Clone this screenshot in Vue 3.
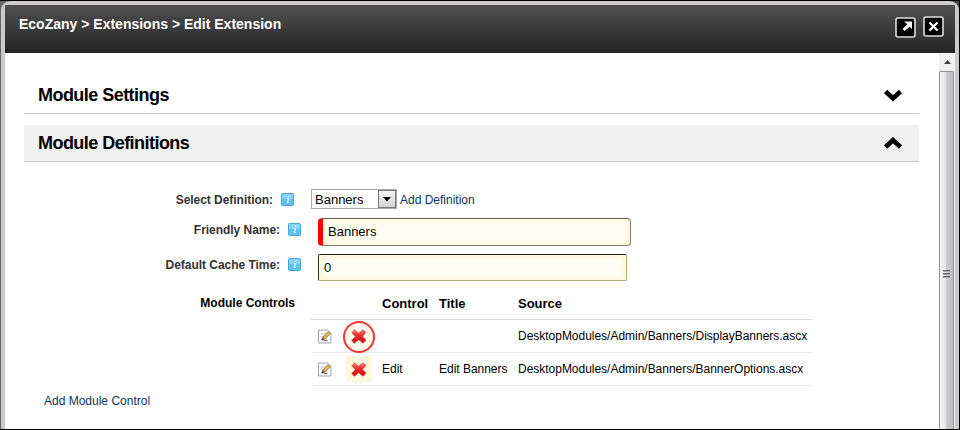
<script setup>
const rows = [
  { control: '', title: '', source: 'DesktopModules/Admin/Banners/DisplayBanners.ascx', circled: true },
  { control: 'Edit', title: 'Edit Banners', source: 'DesktopModules/Admin/Banners/BannerOptions.ascx', circled: false },
]
</script>

<template>
  <div class="frame">
    <div class="dialog">
      <header class="titlebar">
        <span class="crumbs">EcoZany &gt; Extensions &gt; Edit Extension</span>
        <svg class="winbtn" width="21" height="21" viewBox="0 0 21 21">
          <rect x="1" y="1" width="19" height="19" rx="2" fill="#000" stroke="#ddd" stroke-width="1.6" />
          <path d="M9 4.500h8v7.500l-2.300-2.300-5.200 4.300-2-2 4.800-4.700z" fill="#fff" />
        </svg>
        <svg class="winbtn last" width="21" height="21" viewBox="0 0 21 21">
          <rect x="1" y="1" width="19" height="19" rx="2" fill="#000" stroke="#ddd" stroke-width="1.6" />
          <path d="M6.500 6.500l8 8M14.500 6.500l-8 8" stroke="#fff" stroke-width="2.400" />
        </svg>
      </header>
      <div class="body">
        <main class="content">
          <div class="section">
            <h2>Module Settings</h2>
            <svg width="18" height="13" viewBox="0 0 18 13"><path d="M1.500 2.500L9 9.300L16.500 2.500" fill="none" stroke="#000" stroke-width="4.600" /></svg>
          </div>
          <div class="section open">
            <h2>Module Definitions</h2>
            <svg width="18" height="13" viewBox="0 0 18 13"><path d="M1.500 10L9 3.200L16.500 10" fill="none" stroke="#000" stroke-width="4.600" /></svg>
          </div>

          <div class="field definition">
            <label>Select Definition:</label>
            <svg class="info" width="13" height="13" viewBox="0 0 13 13"><rect x=".5" y=".5" width="12" height="12" rx="1" fill="#5fc3ee" stroke="#4aa5d2" /><path d="M1 1h11v5H1z" fill="#85d3f5" /><path d="M7 3h1.500M6 5.500h1.400l-1 4h1.300" fill="none" stroke="#fff" stroke-width="1.100" /></svg>
            <div class="select"><span>Banners</span><i><svg width="8" height="5" viewBox="0 0 8 5"><path d="M0 0h8L4 4.500z" /></svg></i></div>
            <a class="adddef">Add Definition</a>
          </div>
          <div class="field friendly">
            <label>Friendly Name:</label>
            <svg class="info" width="13" height="13" viewBox="0 0 13 13"><rect x=".5" y=".5" width="12" height="12" rx="1" fill="#5fc3ee" stroke="#4aa5d2" /><path d="M1 1h11v5H1z" fill="#85d3f5" /><path d="M7 3h1.500M6 5.500h1.400l-1 4h1.300" fill="none" stroke="#fff" stroke-width="1.100" /></svg>
            <div class="input required"><span>Banners</span></div>
          </div>
          <div class="field cache">
            <label>Default Cache Time:</label>
            <svg class="info" width="13" height="13" viewBox="0 0 13 13"><rect x=".5" y=".5" width="12" height="12" rx="1" fill="#5fc3ee" stroke="#4aa5d2" /><path d="M1 1h11v5H1z" fill="#85d3f5" /><path d="M7 3h1.500M6 5.500h1.400l-1 4h1.300" fill="none" stroke="#fff" stroke-width="1.100" /></svg>
            <div class="input"><span>0</span></div>
          </div>

          <div class="controls">
            <span class="caption">Module Controls</span>
            <div class="grid">
              <div class="row head">
                <span></span><span></span><span>Control</span><span>Title</span><span>Source</span>
              </div>
              <div v-for="row in rows" :key="row.source" class="row">
                <svg class="edit" width="14" height="15" viewBox="0 0 14 15">
                  <path d="M.5 1h9l3.500 3.500V14H.5z" fill="#f5f7f9" stroke="#a2a8ae" />
                  <path d="M3 5h5M3 7.500h3M3 10h2" stroke="#c3cbd3" />
                  <path d="M4 11l1-3 5-5.500L12.500 4.200 7.300 10z" fill="#e3b647" stroke="#8a713c" stroke-width=".7" />
                  <path d="M4 11l.8-2.200 1.600 1.300zM5.500 11.500h4" fill="#333" stroke="#555" stroke-width=".7" />
                </svg>
                <div class="delete" :class="{ circled: row.circled }">
                  <svg width="16" height="15" viewBox="0 0 16 15">
                    <defs><linearGradient id="red" x1="0" y1="0" x2="0" y2="1"><stop offset="0" stop-color="#f98c80" /><stop offset=".4" stop-color="#ee2d2d" /><stop offset="1" stop-color="#c90c12" /></linearGradient></defs>
                    <path d="M3.500 .8L7.600 4.300 12 .8l3 2.600-3.500 3.800 3.500 4-3 3-4.300-3.500-4.400 3.500-2.600-2.800L4.500 7.500.8 4z" fill="url(#red)" stroke="#d33a35" stroke-width=".7" stroke-linejoin="round" />
                  </svg>
                </div>
                <span>{{ row.control }}</span>
                <span class="cell">{{ row.title }}</span>
                <span class="cell">{{ row.source }}</span>
              </div>
            </div>
          </div>
          <a class="addcontrol">Add Module Control</a>
        </main>
        <aside class="scrollbar">
          <div class="up"><svg width="7" height="4" viewBox="0 0 7 4"><path d="M0 4L3.500 0 7 4z" fill="#444" /></svg></div>
          <div class="thumb"><div class="grip"><b></b><b></b><b></b></div></div>
        </aside>
      </div>
    </div>
  </div>
</template>

<style>
body { margin: 0; overflow: hidden; background: #000; }
</style>
<style scoped>
* { box-sizing: border-box; }
.frame { width: 960px; height: 430px; padding: 1px 1px 1px 0; background: linear-gradient(#666, #666) 0 1px / 12px 428px no-repeat, linear-gradient(#444, #444) 947px 1px / 12px 12px no-repeat, #000; font: 12px/14px "Liberation Sans", Arial, sans-serif; color: #000; overflow: hidden; }
.dialog { height: 428px; border: solid #cbc9ca; border-width: 4px 4px 0 4px; border-radius: 9px 9px 0 0; margin-left: 1px; background: #cbc9ca; display: flex; flex-direction: column; }
.titlebar { height: 48px; flex: none; background: linear-gradient(#505050, #242424); display: flex; align-items: flex-start; padding: 12px 11px 0 14px; }
.crumbs { flex: 1; color: #fff; font-weight: bold; font-size: 14px; line-height: 15px; white-space: nowrap; }
.winbtn { margin-right: 7px; }
.winbtn.last { margin: -1px 0 0; }
.body { flex: 1; display: flex; min-height: 0; }
.content { flex: 1; background: #fff; padding: 24px 20px 0 19px; white-space: nowrap; }
.section { height: 37px; display: flex; align-items: center; justify-content: space-between; padding: 0 17px 0 14px; border-bottom: 1px solid #c8c8c8; }
.section.open { background: #f0f0f0; margin-top: 11px; }
h2 { margin: 0; font-size: 18px; line-height: 20px; letter-spacing: -0.54px; }
.field { display: flex; align-items: flex-start; }
.field label { font-weight: bold; color: #333; text-align: right; flex: none; letter-spacing: -0.04px; }
.info { margin-left: 8px; flex: none; }
.definition { margin-top: 27px; height: 29px; }
.definition label { width: 249px; padding-top: 4px; }
.definition .info { margin-top: 4px; }
.friendly { height: 36px; }
.friendly label, .cache label { width: 256px; padding-top: 5px; }
.friendly .info { margin-top: 5px; }
.cache label, .cache .info { margin-top: 4px; padding-top: 0; }
.select { width: 86px; height: 20px; margin-left: 17px; border: 1px solid #aaa; display: flex; justify-content: space-between; padding-left: 3px; font-size: 13px; line-height: 20px; }
.select i { width: 18px; height: 18px; border: 1px solid #777; background: linear-gradient(#f4f4f4, #d3d3d3); display: flex; align-items: center; justify-content: center; }
a { color: #0b3460; }
.adddef { margin: 4px 0 0 3px; }
.input { width: 309px; height: 27px; margin: 0 0 0 17px; border: 1px solid; border-color: #222 #b8ad78 #b8ad78 #302e20; border-radius: 2px; background: #fffef5; box-shadow: inset 0 0 7px 1px #fff3cc; padding-left: 5px; line-height: 26px; font-size: 13px; }
.input.required { width: 313px; height: 28px; border-color: #625a48 #847b62 #847b62 red; border-left-width: 5px; border-radius: 4px; }
.cache { height: 41px; }
.controls { display: flex; }
.caption { width: 271px; text-align: right; font-weight: bold; padding-top: 1px; }
.grid { margin-left: 16px; width: 501px; }
.row { display: grid; grid-template-columns: 33px 38px 57px 79px 1fr; grid-template-rows: 100%; height: 33px; align-items: center; border-bottom: 1px solid #ebebeb; }
.row.head { height: 25px; align-items: start; font-size: 13px; font-weight: bold; padding-top: 2px; border-color: #ddd; }
.cell { letter-spacing: -0.02px; }
.edit { margin-left: 7px; }
.delete { width: 26px; height: 26px; margin-left: 2px; display: flex; align-items: center; justify-content: center; border-radius: 3px; background: #fff8df; box-shadow: inset 0 0 4px #fff2c8; }
.delete.circled { width: 32px; height: 32px; margin: 1px 0 -1px -1px; padding-bottom: 2px; border: 2px solid #ee3639; border-radius: 50%; background: #fffaf0; }
.addcontrol { display: block; margin: 8px 0 0 20px; }
.scrollbar { width: 16px; background: #f0f0f0; display: flex; flex-direction: column; }
.up { height: 18px; display: flex; align-items: center; justify-content: center; }
.thumb { flex: 1; border: 1px solid #929294; border-bottom: 0; border-radius: 2px 2px 0 0; background: linear-gradient(90deg, #f5f5f5, #e5e5e6 45%, #cbcbd0 50%, #bdbdc4); margin-right: 1px; display: flex; justify-content: center; }
.grip { margin-top: 198px; display: flex; flex-direction: column; gap: 1px; }
.grip b { width: 7px; height: 2px; background: #666; border-bottom: 1px solid #aaa; }
</style>
